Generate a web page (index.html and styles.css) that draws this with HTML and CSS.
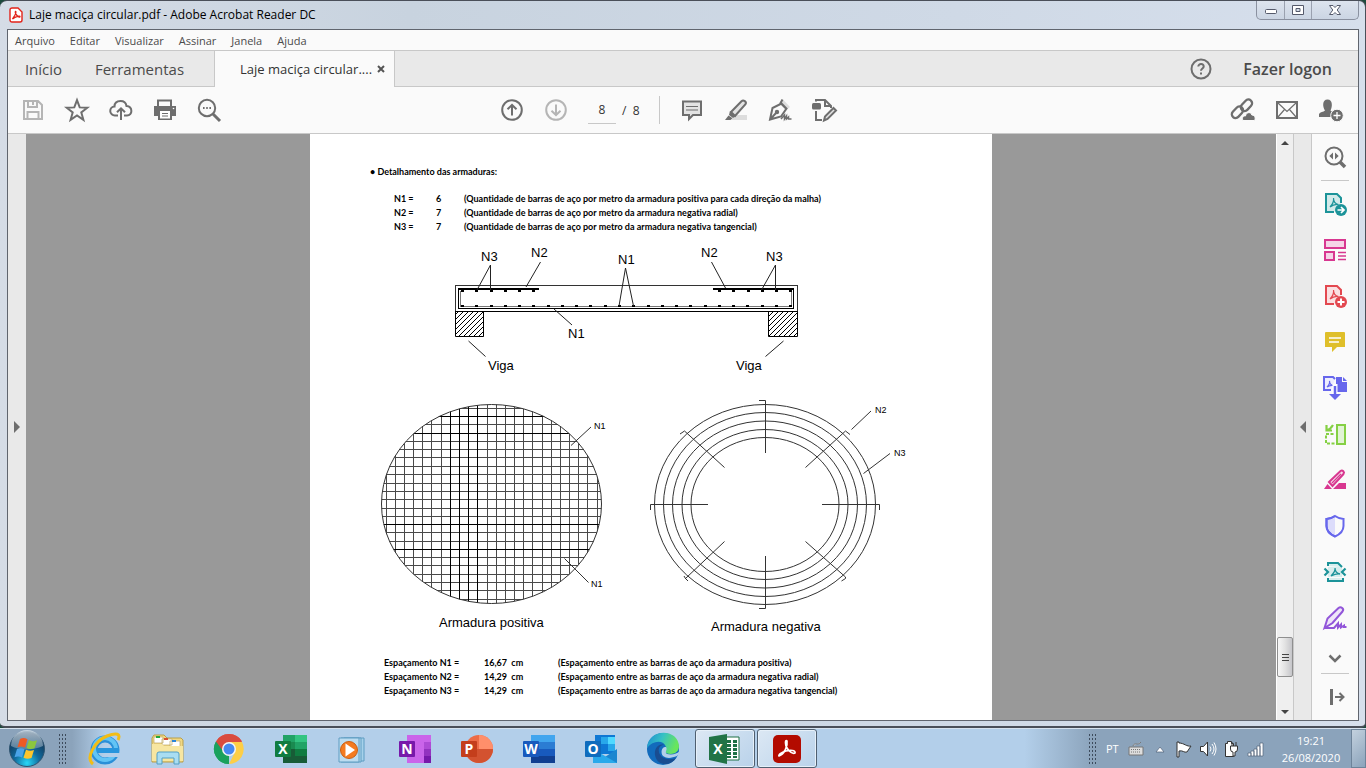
FILE: index.html
```html
<!DOCTYPE html>
<html lang="pt-BR">
<head>
<meta charset="utf-8">
<title>Laje maciça circular.pdf - Adobe Acrobat Reader DC</title>
<link rel="stylesheet" href="styles.css">
</head>
<body>
<div class="window">
  <header class="titlebar">
    <svg class="app-icon" width="14" height="16" viewBox="0 0 14 16"><path d="M1 3a2 2 0 0 1 2-2h6l4 4v8a2 2 0 0 1-2 2H3a2 2 0 0 1-2-2z" fill="#fff" stroke="#e2231a" stroke-width="1.4"/><path d="M3.500 12c1-2 4-5 3.300-7.500C6 4 6 6.500 8 8.500s3 1.800 3 1-4-.5-7.500 2.500z" fill="none" stroke="#e2231a" stroke-width="1.300"/></svg>
    <h1 class="title">Laje maciça circular.pdf - Adobe Acrobat Reader DC</h1>
    <div class="win-controls">
      <button class="win-btn" aria-label="Minimizar"><svg width="14" height="14" viewBox="0 0 14 14"><rect x="1.500" y="6.500" width="11" height="4" rx="1" fill="#fff" stroke="#555a6b"/></svg></button>
      <button class="win-btn" aria-label="Restaurar"><svg width="14" height="14" viewBox="0 0 14 14"><path d="M1.500 2.500h11v9h-11zM5 5.500h4v3H5z" fill="#fff" stroke="#555a6b" fill-rule="evenodd"/></svg></button>
      <button class="win-btn win-close" aria-label="Fechar"><svg width="14" height="14" viewBox="0 0 14 14"><path d="M1.500 2.500h3.500l2 2 2-2h3.500L9.200 7l3.300 4.500H9l-2-2-2 2H1.500L4.800 7z" fill="#fff" stroke="#555a6b"/></svg></button>
    </div>
  </header>

  <div class="client">
    <nav class="menubar">
      <button>Arquivo</button><button>Editar</button><button>Visualizar</button><button>Assinar</button><button>Janela</button><button>Ajuda</button>
    </nav>

    <div class="tabs">
      <button class="tab tab-home">Início</button>
      <button class="tab tab-tools">Ferramentas</button>
      <div class="tab-doc"><button class="tab-name">Laje maciça circular....</button><button class="tab-close" aria-label="Fechar guia"><svg width="8" height="8" viewBox="0 0 8 8"><path d="M1 1l6 6M7 1L1 7" stroke="#555" stroke-width="2"/></svg></button></div>
      <button class="help" aria-label="Ajuda"><svg width="22" height="22" viewBox="0 0 22 22" fill="none" stroke="#6e6e6e" stroke-width="2"><circle cx="11" cy="11" r="9.500"/><path d="M8.300 8.500c0-3.300 5.400-3.200 5.400 0 0 2-2.700 2-2.700 4.200M11 14.500v2"/></svg></button>
      <button class="login">Fazer logon</button>
    </div>

    <div class="toolbar">
      <div class="group">
        <button class="tool" aria-label="Salvar"><svg class="ico faded" viewBox="0 0 24 24"><path d="M3 3h14l4 4v14H3zM7 3v6h9V3M6.500 21v-7h11v7"/><path d="M12 4v3"/></svg></button>
        <button class="tool" aria-label="Favorito"><svg class="ico" viewBox="0 0 24 24"><path d="M12 2.200l2.700 7.200 7.600.3-6 4.700 2.100 7.400-6.400-4.300-6.400 4.300 2.100-7.400-6-4.700 7.600-.3z"/></svg></button>
        <button class="tool" aria-label="Enviar para a nuvem"><svg class="ico" viewBox="0 0 24 24"><path d="M9 17.500H6a4.500 4.500 0 0 1-.5-9C5.500 5 8 3 11.500 3c3.300 0 5.500 2 6 5 6.500.5 6.300 9.500.5 9.500h-3M12 22V10.500M8 14.300l4-4 4 4"/></svg></button>
        <button class="tool" aria-label="Imprimir"><svg class="ico" viewBox="0 0 24 24"><path d="M5 8V2.500h13V8" /><path d="M1 8h22v10h-4v4H5v-4H1z" fill="#6e6e6e" stroke="none"/><path d="M7 13h10v7.500H7z" fill="#fff" stroke="none"/><path d="M9 15.500h6M9 18h6" stroke-width="1"/><circle cx="20.500" cy="10.500" r=".8" fill="#fff" stroke="none"/></svg></button>
        <button class="tool" aria-label="Localizar"><svg class="ico" viewBox="0 0 24 24"><circle cx="10" cy="10" r="8.200"/><path d="M16 16l7 7" stroke-width="3"/><path d="M6 10h1.600M9.200 10h1.600M12.400 10H14"/></svg></button>
      </div>
      <div class="group group-mid">
        <button class="tool" aria-label="Página anterior"><svg class="ico" viewBox="0 0 24 24"><circle cx="12" cy="12" r="9.800"/><path d="M12 17.500V7M7.500 11.300L12 7l4.500 4.300"/></svg></button>
        <button class="tool" aria-label="Próxima página"><svg class="ico faded" viewBox="0 0 24 24"><circle cx="12" cy="12" r="9.800"/><path d="M12 6.500V17M7.500 12.700L12 17l4.500-4.300"/></svg></button>
        <input class="page-no" type="text" value="8" aria-label="Página">
        <span class="page-total">/&nbsp; 8</span>
        <span class="divider"></span>
        <button class="tool" aria-label="Comentário"><svg class="ico" viewBox="0 0 24 24"><path d="M3 3.500h18v13.500h-8l-4 4v-4H3z" fill="#e3e3e3"/><path d="M6 8.500h12M6 12h12" stroke-width="1.200"/></svg></button>
        <button class="tool" aria-label="Destacar"><svg class="ico" viewBox="0 0 24 24"><path d="M7 22l5-5h11v5z" fill="#ddd" stroke="none"/><path d="M7 14L17.500 3.200c2-1.800 5.500.7 4 3L11 18z" fill="#e3e3e3"/><path d="M6 13l6 5-3 2-4-3zM4.500 17.500L1 22h5.500l2-1.800z" fill="#6e6e6e" stroke="none"/></svg></button>
        <button class="tool" aria-label="Assinar"><svg class="ico" viewBox="0 0 24 24"><path d="M15 1.500L22 9l-2.500 2-7-7z" fill="#ddd" stroke="none"/><path d="M2 21.500L4.500 10l9-4.500 5 5L13 18.500zM2 21.500l6.500-7M14.500 1.500l-2 3.500 6.500 6.500"/><circle cx="9" cy="14" r="1.200" fill="#6e6e6e"/><path d="M13 21l3.500-4v4l2-3v3l2-2v2h3" stroke-width="1.500"/></svg></button>
        <button class="tool" aria-label="Mais ferramentas"><svg class="ico" viewBox="0 0 24 24"><path d="M4 3.500V2h9l6 6v2M13 2.500V8h6M4 13v9h6"/><rect x="0" y="5" width="9" height="6.500" rx="1.500" fill="#6e6e6e" stroke="none"/><path d="M12 22.500l1-4 8.500-8.500 2.500 2.500-8.500 8.500z" fill="#e3e3e3"/></svg></button>
      </div>
      <div class="group group-end">
        <button class="tool" aria-label="Compartilhar link"><svg class="ico" viewBox="0 0 24 24"><g stroke-width="2.300"><rect x="9" y="3.500" width="13" height="7.500" rx="3.700" transform="rotate(-47 15.500 7.300)"/><rect x="0" y="10.500" width="13" height="7.500" rx="3.700" transform="rotate(-47 6.500 14.300)"/></g><path d="M12 22.500c-1.500-3 .5-5 2.500-4.500.5-4 5.500-4.500 6.300-1 3.500 0 4 4 2.700 5.500z" fill="#6e6e6e" stroke="#fafafa" stroke-width="1"/></svg></button>
        <button class="tool" aria-label="Enviar por e-mail"><svg class="ico" viewBox="0 0 24 24"><path d="M2 4h20v16H2z"/><path d="M3 5l9 8.500L21 5M3 19l6.500-7.500M21 19l-6.500-7.500" stroke-width="1.200"/></svg></button>
        <button class="tool" aria-label="Convidar pessoas"><svg class="ico" viewBox="0 0 24 24"><path d="M0 19v-3c1-2 4.500-2 6-3.500C3.500 9 3 1.500 8.500 1.500S13.500 9 11.500 12.500c1 1 3 1.300 4.500 2v4.500z" fill="#6e6e6e" stroke="none"/><circle cx="18" cy="17.500" r="6.300" fill="#6e6e6e" stroke="#fafafa" stroke-width="1"/><path d="M14.500 17.500h7M18 14v7" stroke="#fff" stroke-width="1.300"/></svg></button>
      </div>
    </div>

    <div class="workspace">
      <button class="rail rail-left" aria-label="Abrir painel de navegação"><svg width="6" height="12" viewBox="0 0 6 12"><path d="M0 0l6 6-6 6z" fill="#6e6e6e"/></svg></button>

      <main class="viewer">
        <article class="sheet">
          <h2 class="sheet-title">• Detalhamento das armaduras:</h2>
          <table class="data bars">
            <tr><th scope="row">N1 =</th><td>6</td><td>(Quantidade de barras de aço por metro da armadura positiva para cada direção da malha)</td></tr>
            <tr><th scope="row">N2 =</th><td>7</td><td>(Quantidade de barras de aço por metro da armadura negativa radial)</td></tr>
            <tr><th scope="row">N3 =</th><td>7</td><td>(Quantidade de barras de aço por metro da armadura negativa tangencial)</td></tr>
          </table>

          <svg class="figure" viewBox="310 234 682 150" role="img" aria-label="Corte da laje">
            <defs><pattern id="hatch" width="5" height="5" patternUnits="userSpaceOnUse"><path d="M-1 6L6-1M-1 1l2-2M4 6l2-2" stroke="#000" stroke-width="1"/></pattern></defs>
            <g fill="none" stroke="#000" shape-rendering="crispEdges">
              <path d="M455.500 311.500v-26h342v26" stroke="#333"/>
              <path d="M455 311.500h343"/>
              <path d="M458.500 289v19.500h335V289"/>
              <path d="M460.500 291v15.500h331V291" stroke="#777"/>
              <path d="M458 289h81M713 289h81" stroke-width="2"/>
              <path d="M461 306h334" stroke-width="2" stroke-dasharray="3 11.270"/>
              <path d="M461 291h77M718 291h77" stroke-width="2" stroke-dasharray="3 11.270"/>
            </g>
            <path d="M455.500 311.500h28v25h-28zM768.500 311.500h29v25h-29z" fill="url(#hatch)" stroke="#000"/>
            <path d="M490.500 265L477 290m13.500-25v25M540.500 262L526 287M625.500 268L619 306m6.500-38l8 38M711.500 262l14 26M775.500 265l-14 25m14-25v25M554 309l18 16M468.500 341l17 15.500M783.500 341l-18 15.500" fill="none" stroke="#222"/>
            <g class="label">
              <text x="481" y="261">N3</text><text x="531" y="257">N2</text><text x="618" y="264">N1</text><text x="701" y="257">N2</text><text x="766" y="261">N3</text><text x="568" y="338">N1</text><text x="488" y="370">Viga</text><text x="736" y="370">Viga</text>
            </g>
          </svg>

          <svg class="figure" viewBox="310 384 682 272" role="img" aria-label="Armaduras positiva e negativa">
            <defs><clipPath id="disc"><ellipse cx="491.500" cy="504" rx="110" ry="99.500"/></clipPath></defs>
            <g clip-path="url(#disc)" stroke="#4a4a4a" fill="none" shape-rendering="crispEdges">
              <path d="M386.500 400v208m9-208v208m9-208v208m9-208v208m9-208v208m9-208v208m10-208v208m9-208v208m9-208v208m9-208v208m9-208v208m10-208v208m9-208v208m9-208v208m9-208v208m9-208v208m9-208v208m10-208v208m9-208v208m9-208v208m9-208v208m9-208v208m9-208v208m10-208v208"/>
              <path d="M380 408.500h224m-224 8h224m-224 8h224m-224 9h224m-224 8h224m-224 8h224m-224 8h224m-224 9h224m-224 8h224m-224 9h224m-224 8h224m-224 8h224m-224 9h224m-224 8h224m-224 8h224m-224 8h224m-224 9h224m-224 8h224m-224 8h224m-224 8h224m-224 9h224m-224 8h224m-224 8h224m-224 9h224"/>
              <path d="M450.500 400v208m9-208v208m9-208v208m9-208v208M380 416.500h224M380 433.500h224M380 524.500h224M380 549.500h224" stroke="#000"/>
            </g>
            <g fill="none" stroke="#333">
              <ellipse cx="491.500" cy="504" rx="110" ry="99.500"/>
              <path d="M591 427l-20 18.500M588.500 582.500l-24-24"/>
              <ellipse cx="765" cy="504.500" rx="110.500" ry="100"/>
              <ellipse cx="765" cy="504.500" rx="101.500" ry="92"/>
              <ellipse cx="765" cy="504.500" rx="92.500" ry="83.500"/>
              <ellipse cx="765" cy="504.500" rx="83" ry="75"/>
              <ellipse cx="765" cy="504.500" rx="74" ry="67"/>
              <path d="M759 400.500h6.500V453M765.500 556v52.500H759M650.500 510v-5.500H708M822 504.500h57.500v5.500M680 434l4.500-3 40 36.500M850 434.500l-4.500-3.500-40 36.500M684 576l1.500 2.500 39-37M685 578l3 3M845.500 577l-40-35.500M845.500 577v1.500l-4 2.500"/>
              <path d="M871 411l-19.500 18.500M890 453.500l-26.500 20"/>
            </g>
            <g class="label small"><text x="594" y="429">N1</text><text x="591" y="587">N1</text><text x="875" y="413">N2</text><text x="894" y="456">N3</text></g>
            <g class="label"><text x="439" y="627">Armadura positiva</text><text x="711" y="631">Armadura negativa</text></g>
          </svg>

          <table class="data spacing">
            <tr><th scope="row">Espaçamento N1 =</th><td>16,67&nbsp; cm</td><td>(Espaçamento entre as barras de aço da armadura positiva)</td></tr>
            <tr><th scope="row">Espaçamento N2 =</th><td>14,29&nbsp; cm</td><td>(Espaçamento entre as barras de aço da armadura negativa radial)</td></tr>
            <tr><th scope="row">Espaçamento N3 =</th><td>14,29&nbsp; cm</td><td>(Espaçamento entre as barras de aço da armadura negativa tangencial)</td></tr>
          </table>
        </article>
      </main>

      <div class="scrollbar">
        <button class="arrow" aria-label="Rolar para cima"><svg width="8" height="4" viewBox="0 0 8 4"><path d="M0 4l4-4 4 4z" fill="#444"/></svg></button>
        <span class="track-above"></span>
        <button class="thumb" aria-label="Barra de rolagem"><svg width="7" height="9" viewBox="0 0 7 9"><path d="M0 1.500h7M0 4.500h7M0 7.500h7" stroke="#444"/></svg></button>
        <span class="track-below"></span>
        <button class="arrow" aria-label="Rolar para baixo"><svg width="8" height="4" viewBox="0 0 8 4"><path d="M0 0l4 4 4-4z" fill="#444"/></svg></button>
      </div>

      <button class="rail rail-right" aria-label="Fechar painel de ferramentas"><svg width="6" height="12" viewBox="0 0 6 12"><path d="M6 0L0 6l6 6z" fill="#6e6e6e"/></svg></button>

      <aside class="panel">
        <button class="side" aria-label="Pesquisar"><svg class="ico" viewBox="0 0 24 24"><circle cx="11" cy="11" r="8.500"/><path d="M17 17l5 5" stroke-width="3.500"/><path d="M10 7.500v7L6.300 11zM12 7.500v7l3.700-3.500z" fill="#6e6e6e" stroke="none"/></svg></button>
        <span class="panel-line"></span>
        <button class="side teal" aria-label="Exportar PDF"><svg class="ico" viewBox="0 0 24 24"><path d="M11 20H3V2h11l4 4v5" fill="#d3eaea"/><path d="M7 15c3-3 4-6 3.500-9 0 4 2 6 5 6.500-3-.5-6 .5-8.500 2.500z" stroke-width="1.200"/><circle cx="18" cy="18" r="6" fill="currentColor" stroke="none"/><path d="M14.500 18h6M18 15l3 3-3 3" stroke="#fff" stroke-width="1.700"/></svg></button>
        <button class="side pink" aria-label="Organizar páginas"><svg class="ico" viewBox="0 0 24 24"><path d="M2 2h20v8H2zM2 14h9v8H2z" fill="#f5d4e7"/><path d="M15 14.500h8M15 18h8M15 21.500h8" stroke-width="1.300"/></svg></button>
        <button class="side red" aria-label="Criar PDF"><svg class="ico" viewBox="0 0 24 24"><path d="M11 20H3V2h11l4 4v5" fill="#fae0e2"/><path d="M7 15c3-3 4-6 3.500-9 0 4 2 6 5 6.500-3-.5-6 .5-8.500 2.500z" stroke-width="1.200"/><circle cx="18" cy="18" r="6" fill="currentColor" stroke="none"/><path d="M14.500 18h7M18 14.500v7" stroke="#fff"/></svg></button>
        <button class="side gold" aria-label="Comentário"><svg class="ico" viewBox="0 0 24 24"><path d="M3 2h18a1 1 0 0 1 1 1v14h-8l-5 5v-5H2V3a1 1 0 0 1 1-1z" fill="currentColor" stroke="none"/><path d="M6 8h12M6 12h10" stroke="#fff" stroke-width="1.700"/></svg></button>
        <button class="side violet" aria-label="Combinar arquivos"><svg class="ico" viewBox="0 0 24 24"><path d="M8 14H1V1h9l2 2" fill="#eeeefe"/><path d="M4 11c2-2 3-4 2.500-6 0 3 1 4 4 4.500-2-.5-4.500 0-6.500 1.500z" stroke-width="1.200"/><path d="M13 1h6v5h5v10H13zM20 1l4 4h-4z" fill="currentColor" stroke="none"/><path d="M12 8v12" stroke="#fff" stroke-width="5"/><path d="M12 10v9" stroke-width="2.500"/><path d="M6 18h12l-6 6z" fill="currentColor" stroke="none"/></svg></button>
        <button class="side green" aria-label="Editar páginas"><svg class="ico" viewBox="0 0 24 24"><path d="M14 3h8v19h-8z" fill="#e1f3d5"/><path d="M10.500 12H3v9.500h9" stroke-dasharray="3 1.500"/><path d="M4 8c3-.5 4.500-2.500 6-5M3.500 3v5.500H9" stroke-width="2.200"/></svg></button>
        <button class="side pink" aria-label="Redigir"><svg class="ico" viewBox="0 0 24 24"><path d="M1 21l3.500-5L9 21zM10 21l6-6h7v6z" fill="currentColor" stroke="none"/><path d="M6 14L17.500 3c2-1.500 4.500 1 3 3L9.500 18z" fill="#f7dcea"/><path d="M9 15L18 6" stroke-width="1.300"/></svg></button>
        <button class="side violet" aria-label="Proteger"><svg class="ico" viewBox="0 0 24 24"><path d="M12 2C9 4 6 5 3.500 5v7c0 5 4 8.500 8.500 10.500" fill="#dcdcfb"/><path d="M12 2c3 2 6 3 8.500 3v7c0 5-4 8.500-8.500 10.500C7.500 20.500 3.500 17 3.500 12V5C6 5 9 4 12 2z"/></svg></button>
        <button class="side teal" aria-label="Compactar PDF"><svg class="ico" viewBox="0 0 24 24"><path d="M5 7h14v10H5z" fill="#d8eeee" stroke="none"/><path d="M5 6V3h10l4 4M5 18v3h15v-3" fill="#d8eeee"/><path d="M8 16c3-3 4.500-5 4-8 0 3.500 2.500 5.500 5 6-3.500-.5-6 .5-9 2z" stroke-width="1.300"/><path d="M1.500 8.500L5 12l-3.500 3.500M22.500 8.500L19 12l3.500 3.500" stroke-width="2.200"/></svg></button>
        <button class="side purple" aria-label="Preencher e assinar"><svg class="ico" viewBox="0 0 24 24"><path d="M1.500 22l3-9.500L15.500 2c2.500-2 6 1 4 3.500L9.500 17z" fill="#efe5f9"/><path d="M1.500 22H11l4-4.500v4l3-3v3l3-2v1.500h2.500"/></svg></button>
        <button class="side side-more" aria-label="Mais"><svg class="ico" viewBox="0 0 24 24"><path d="M6.500 10.500L12 16l5.500-5.500" stroke-width="2.500"/></svg></button>
        <span class="panel-line"></span>
        <button class="side" aria-label="Recolher painel"><svg class="ico" viewBox="0 0 24 24"><path d="M8.500 4v16" stroke-width="3"/><path d="M12 12h8M16.500 8l4 4-4 4"/></svg></button>
      </aside>
    </div>
  </div>
</div>

<footer class="taskbar">
  <button class="start" aria-label="Iniciar"><svg width="38" height="38" viewBox="0 0 38 38"><defs><radialGradient id="orb" cx=".5" cy=".9" r=".8"><stop offset="0" stop-color="#27d8f7"/><stop offset=".45" stop-color="#116b9e"/><stop offset="1" stop-color="#12304f"/></radialGradient><linearGradient id="orbTop" x2="0" y2="1"><stop offset="0" stop-color="#dce6ee"/><stop offset="1" stop-color="#6a8ca6"/></linearGradient></defs><circle cx="19" cy="19" r="17.500" fill="url(#orb)" stroke="#2f5470"/><path d="M3 16a16 16 0 0 1 32 0c-9 4-23 5-32 0z" fill="url(#orbTop)" opacity=".75"/><path d="M12 9c3-1.500 5-1 7.500.3L17 17.500c-3-1.300-5-1.300-7.500-.3z" fill="#ee5a24"/><path d="M21 10c3 1.500 5 1.500 8 .3l-2.500 8c-3 1.200-5 1-8-.4z" fill="#8cc63e"/><path d="M9 19c3-1.300 5-1 7.500.2L14 27.500c-2.500-1.300-5-1.300-7.500-.2z" fill="#4aa3e8"/><path d="M18 19.700c3 1.300 5 1.500 8 .3l-2.500 8c-3 1.200-5.500 1-8-.3z" fill="#fdc52c"/></svg></button>
  <span class="grip"></span>
  <div class="apps">
    <button class="app" aria-label="Internet Explorer"><svg viewBox="0 0 34 34"><circle cx="17" cy="18" r="11" fill="none" stroke="#2a8fd8" stroke-width="7"/><circle cx="17" cy="17" r="11" fill="none" stroke="#62c4f5" stroke-width="4"/><path d="M9 18.500h22" stroke="#2795dd" stroke-width="5"/><path d="M20 21h13v4H20z" fill="#b3cfea"/><path d="M5 32C-3 26 7 9 19 4c10-4 14-2 11 4" fill="none" stroke="#f2bd16" stroke-width="3"/></svg></button>
    <button class="app" aria-label="Explorador"><svg viewBox="0 0 34 34"><path d="M2 30V6l2-3h10l3 3h14l2 2v22z" fill="#f0d883" stroke="#b99f4b"/><path d="M4 5h9v6H4zM12 7h10v6H12zM20 9h10v6H20z" fill="#fff" stroke="#bfa762" stroke-width=".7"/><path d="M6 4h4v2H6z" fill="#1fa83a"/><path d="M14 6h4v2h-4z" fill="#d84c2f"/><path d="M22 8h4v2h-4z" fill="#2c85d7"/><path d="M2 12h10l2 2h19v15H2z" fill="#f7e6a1"/><path d="M7 32V22q0-2 2-2h18q2 0 2 2v10h-5v-6H12v6z" fill="#a9ddf2" stroke="#539fc5"/></svg></button>
    <button class="app" aria-label="Chrome"><svg viewBox="0 0 34 34"><path d="M17 17L4 9.500a15 15 0 0 1 26 0z" fill="#de5145"/><path d="M17 17v15A15 15 0 0 1 4 9.500z" fill="#1ca25c"/><path d="M4 9.500L12 20l5 12a15 15 0 0 1-13-22.500z" fill="#1aa15d"/><path d="M17 10h13a15 15 0 0 1-13 22l6-12z" fill="#fdce46"/><path d="M4 9.500A15 15 0 0 1 30 9.500H17L11 19z" fill="#d94b3e"/><circle cx="17" cy="17" r="7" fill="#f4f4f4"/><circle cx="17" cy="17" r="5.500" fill="#4688f1"/></svg></button>
    <button class="app" aria-label="Excel"><svg viewBox="0 0 34 34"><path d="M9 3h12v14H9z" fill="#21a366"/><path d="M21 3h12v7H21z" fill="#33c481"/><path d="M21 10h12v7H21z" fill="#21a366"/><path d="M9 10h12v7H9z" fill="#1a8a50"/><path d="M9 17h24v14H9z" fill="#185c37"/><path d="M21 17h12v7H21z" fill="#107c41"/><rect x="1" y="9" width="16" height="16" rx="1" fill="#107c41"/><text x="9" y="22">X</text></svg></button>
    <button class="app" aria-label="Media Player"><svg viewBox="0 0 34 34"><path d="M8 6h20v23H8z" fill="#a6d1ea" stroke="#5e9dc2"/><path d="M5 6h20v24H5z" fill="#b5d9ed" stroke="#5e9dc2"/><path d="M3 6h20v24H3z" fill="#bcdcf0" stroke="#5e9dc2"/><circle cx="13" cy="18" r="8.500" fill="#f47b20" stroke="#ca5f13"/><path d="M9.500 11.500L19 18l-9.500 6.500z" fill="#fff"/></svg></button>
    <button class="app" aria-label="OneNote"><svg viewBox="0 0 34 34"><path d="M9 3h24v28H9z" fill="#ca64ea"/><path d="M26 10h7v7h-7z" fill="#ae4bd5"/><path d="M26 17h7v7h-7z" fill="#9332bf"/><path d="M26 24h7v7h-7z" fill="#7719aa"/><rect x="1" y="9" width="16" height="16" rx="1" fill="#7719aa"/><text x="9" y="22">N</text></svg></button>
    <button class="app" aria-label="PowerPoint"><svg viewBox="0 0 34 34"><circle cx="19" cy="17" r="14" fill="#ed6c47"/><path d="M19 3a14 14 0 0 1 14 14H19z" fill="#ff8f6b"/><path d="M5 17h28a14 14 0 0 1-28 0z" fill="#d35230"/><rect x="1" y="9" width="16" height="16" rx="1" fill="#c43e1c"/><text x="9" y="22">P</text></svg></button>
    <button class="app" aria-label="Word"><svg viewBox="0 0 34 34"><path d="M9 3h24v7H9z" fill="#41a5ee"/><path d="M9 10h24v7H9z" fill="#2b7cd3"/><path d="M9 17h24v7H9z" fill="#185abd"/><path d="M9 24h24v7H9z" fill="#103f91"/><rect x="1" y="9" width="16" height="16" rx="1" fill="#185abd"/><text x="9" y="22">W</text></svg></button>
    <button class="app" aria-label="Outlook"><svg viewBox="0 0 34 34"><path d="M11 3h20v19H11z" fill="#0f78d4"/><path d="M17 5h7v7h-7z" fill="#28a8ea"/><path d="M24 5h7v7h-7z" fill="#50d9ff"/><path d="M24 12h7v7h-7z" fill="#28a8ea"/><path d="M9 18l12 7 12-8v14H9z" fill="#1a86d0"/><path d="M9 17l24 14H9z" fill="#29a9eb"/><rect x="1" y="9" width="16" height="16" rx="1" fill="#0f6cbd"/><text x="9" y="22">O</text></svg></button>
    <button class="app" aria-label="Edge"><svg viewBox="0 0 34 34"><defs><linearGradient id="edge" x2="1" y2=".3"><stop offset="0" stop-color="#198bd1"/><stop offset=".5" stop-color="#36c1c5"/><stop offset="1" stop-color="#69e65c"/></linearGradient></defs><circle cx="17" cy="17" r="16" fill="#126bbc"/><path d="M1 16C2-4 32-4 33 14c0 8-8 9-13 7-3-2 1-3 0-6C18 8 7 8 1 16z" fill="url(#edge)"/><path d="M18 13c-7 0-7 10 0 13 5 2 9 1 12 0-6 9-19 8-21-3-1-7 4-12 9-10z" fill="#194d91"/><path d="M21 22c-3-2 1-4-1-7-4-1-6 5-3 9 4 3 9 2 14 0 3-3 3-4 3-5-3 3-8 4-13 3z" fill="#b3cfea"/></svg></button>
    <button class="app open" aria-label="Excel 2013"><svg viewBox="0 0 34 34"><path d="M17 5h14v23H17z" fill="#fff" stroke="#1e7145"/><path d="M19 8h4v3h-4zm6 0h4v3h-4zm-6 4h4v3h-4zm6 0h4v3h-4zm-6 4h4v3h-4zm6 0h4v3h-4zm-6 4h4v3h-4zm6 0h4v3h-4zm-6 4h4v2h-4zm6 0h4v2h-4z" fill="#1e7145"/><path d="M1 5l18-3v30L1 28z" fill="#217346"/><text x="10" y="22">X</text></svg></button>
    <button class="app open" aria-label="Acrobat Reader"><svg viewBox="0 0 34 34"><rect x="3" y="3" width="28" height="28" rx="5" fill="#b30b00"/><path d="M9 24c5-2 9-9 8-15-2-2-2 4 0 7 2 4 6 6 8 5 1-3-5-3-9-2s-8 4-7 5z" fill="none" stroke="#fff" stroke-width="1.700"/></svg></button>
  </div>
  <div class="tray">
    <span class="grip"></span>
    <span class="lang">PT</span>
    <button aria-label="Teclado"><svg viewBox="0 0 18 18"><path d="M2 7h14v8H2zM6 6c1-4 5 0 8-4" fill="#ddd" stroke="#777"/><path d="M4 9.500h10M4 12h10" stroke="#777" stroke-dasharray="1 1"/></svg></button>
    <button aria-label="Mostrar ícones ocultos"><svg viewBox="0 0 18 18"><path d="M5 12l4-5 4 5z" fill="#fff" stroke="#52627a" stroke-width=".7"/></svg></button>
    <button aria-label="Central de ações"><svg viewBox="0 0 18 18"><path d="M2 2v15h2v-6c4-1 5 2 8 1l4-6c-4 1-7-3-12-3V2z" fill="#fff" stroke="#333"/></svg></button>
    <button aria-label="Volume"><svg viewBox="0 0 18 18"><path d="M1.500 6.500h3l4-4.500v14l-4-4.500h-3z" fill="#fff" stroke="#333"/><path d="M11 6.500q2 2.500 0 5M13 4q4 5 0 10M15 2.500q4 6.500 0 13" fill="none" stroke="#fff"/></svg></button>
    <button aria-label="Energia"><svg viewBox="0 0 18 18"><path d="M2.500 3.500h2v-2h4v2h2v13h-8z" fill="#fff" stroke="#333"/><path d="M9 2v4M13 2v4M7.500 6h7v3q0 3-2.500 3v4h-2v-4Q7.500 12 7.500 9z" fill="#fff" stroke="#333"/></svg></button>
    <button aria-label="Rede"><svg viewBox="0 0 18 18"><path d="M1 13h3v3H1zM4 11h3v5H4zM7 9h3v7H7zM10 6h3v10h-3zM13 3h3v13h-3z" fill="#fff" stroke="#52627a" stroke-width=".7"/></svg></button>
    <button class="clock"><time datetime="2020-08-26T19:21">19:21<br>26/08/2020</time></button>
    <button class="show-desktop" aria-label="Mostrar área de trabalho"></button>
  </div>
</footer>
</body>
</html>
```

FILE: styles.css
```css
* { box-sizing: border-box; }

body {
  margin: 0;
  height: 100vh;
  display: flex;
  flex-direction: column;
  overflow: hidden;
  font-family: "Open Sans", "Noto Sans", sans-serif;
  font-size: 12px;
  color: #4b4b4b;
  background: #1c4a3c;
}

button {
  margin: 0;
  padding: 0;
  border: 0;
  background: none;
  font: inherit;
  color: inherit;
}

svg { display: block; flex: none; }

/* Window frame */
.window {
  flex: 1;
  min-height: 0;
  display: flex;
  flex-direction: column;
  padding: 0 6px 5px 7px;
  border: solid #4a4f59;
  border-width: 1px 1px 2px 0;
  border-radius: 7px 7px 5px 5px;
  background: linear-gradient(90deg, #d5dce6, #c8d3df 30%, #cfd9e6 70%, #d6dfec);
}

.titlebar {
  height: 28px;
  display: flex;
  align-items: center;
  padding-left: 2px;
}

.title {
  flex: 1;
  margin: 0 0 0 6px;
  font-size: 12px;
  line-height: 16px;
  font-weight: 400;
  color: #000;
}

.win-controls {
  align-self: flex-start;
  display: flex;
  height: 19px;
  border: 1px solid #8a91a0;
  border-top: 0;
  border-radius: 0 0 5px 5px;
  background: linear-gradient(#dde4ee, #cbd5e3);
}

.win-btn {
  width: 27px;
  display: grid;
  place-items: center;
}

.win-btn + .win-btn { border-left: 1px solid #9aa1af; }
.win-btn.win-close { width: 47px; }

.client {
  flex: 1;
  min-height: 0;
  display: flex;
  flex-direction: column;
  border: 1px solid #60656e;
  background: #fafafa;
}

/* Menu bar and tabs */
.menubar {
  height: 20px;
  display: flex;
  align-items: center;
  gap: 15px;
  padding-left: 7px;
  font-size: 11px;
}

.tabs {
  height: 37px;
  display: flex;
  align-items: stretch;
  border: solid #c8c8c8;
  border-width: 1px 0;
  background: #e9e9e9;
  font-size: 15px;
}

.tab-home { width: 71px; }
.tab-tools { width: 121px; margin-right: 14px; }

.tab-doc {
  width: 181px;
  display: flex;
  align-items: center;
  gap: 5px;
  margin-bottom: -1px;
  padding-left: 25px;
  border: solid #c8c8c8;
  border-width: 0 1px;
  background: #fafafa;
  font-size: 13px;
  color: #333;
}

.help { margin-left: auto; display: grid; place-items: center; }
.login { margin: 0 26px 0 31px; font-size: 16px; font-weight: 600; }

/* Toolbar */
.toolbar {
  height: 47px;
  display: grid;
  grid-template-columns: 1fr auto 1fr;
  border-bottom: 1px solid #c8c8c8;
  font-size: 12px;
}

.group { display: flex; align-items: center; padding-left: 3px; }
.group-mid { padding: 0 30px 0 0; }
.group-end { justify-content: flex-end; padding-right: 5px; }

.tool { width: 44px; height: 46px; display: grid; place-items: center; }

.ico {
  width: 24px;
  height: 24px;
  fill: none;
  stroke: currentColor;
  stroke-width: 2;
  overflow: visible;
}

.tool, .side { color: #6e6e6e; }
.tool .faded { color: #b5b5b5; }

.page-no {
  width: 28px;
  height: 28px;
  margin: 0 6px 0 10px;
  padding: 0;
  border: 0;
  border-bottom: 1px solid #c8c8c8;
  background: none;
  font: inherit;
  color: #333;
  text-align: center;
}

.page-total { width: 37px; color: #333; }
.divider { width: 1px; height: 28px; margin-right: 10px; background: #c8c8c8; }

/* Workspace */
.workspace { flex: 1; min-height: 0; display: flex; }

.rail {
  width: 18px;
  display: grid;
  place-items: center;
  background: #e9e9e9;
}

.rail-right { width: 19px; border: solid #c8c8c8; border-width: 0 1px; }

.viewer {
  flex: 1;
  min-width: 0;
  overflow: hidden;
  background: #999;
}

.sheet {
  width: 682px;
  min-height: 100%;
  margin: 0 auto;
  padding-top: 31px;
  background: #fff;
  font-family: Lato, "Open Sans", sans-serif;
  font-size: 9px;
  line-height: 14px;
  font-variant-ligatures: none;
  color: #000;
}

.sheet-title {
  margin: 0 0 13px 60px;
  font-size: inherit;
  font-weight: 700;
}

.data { border-collapse: collapse; font-weight: 700; }
.data th, .data td { padding: 0; text-align: left; white-space: nowrap; }
.bars { margin-left: 84px; }
.bars th { width: 42px; }
.bars td:nth-child(2) { width: 28px; }
.spacing { margin-left: 74px; }
.spacing th { width: 100px; }
.spacing td:nth-child(2) { width: 74px; }

.figure { width: 100%; height: auto; }

.label {
  font-family: "Liberation Sans", Arial, sans-serif;
  font-size: 13px;
  fill: #000;
}

.small { font-size: 9px; }

.scrollbar {
  width: 17px;
  display: flex;
  flex-direction: column;
  border-left: 1px solid #fff;
  background: #efefef;
}

.arrow { height: 17px; display: grid; place-items: center; }
.track-above { flex: 19; }
.track-below { flex: 1; }

.thumb {
  height: 40px;
  display: grid;
  place-items: center;
  border: 1px solid #8f8f8f;
  border-radius: 2px;
  background: linear-gradient(90deg, #f7f7f7, #e2e2e2 50%, #c6c6ca);
}

.panel {
  width: 46px;
  display: flex;
  flex-direction: column;
  align-items: center;
  overflow: hidden;
}

.side { flex: none; width: 46px; height: 46px; display: grid; place-items: center; }
.side-more { height: 32px; }
.panel-line { flex: none; width: 28px; height: 1px; background: #c8c8c8; }

.teal { color: #1c9399; }
.pink { color: #d83790; }
.red { color: #e34850; }
.gold { color: #dfbf2a; }
.violet { color: #6767ec; }
.green { color: #85d044; }
.purple { color: #9256d9; }

/* Taskbar */
.taskbar {
  flex: none;
  height: 40px;
  display: flex;
  align-items: stretch;
  border-top: 1px solid #d5e2ef;
  background: linear-gradient(90deg, #8ba3bb, #8ba3bb 72px, #b3cfea 105px, #b3cfea 75%, #8ba3bb 80%);
}

.start { width: 54px; display: grid; place-items: center; }

.grip {
  align-self: center;
  width: 9px;
  height: 32px;
  background: radial-gradient(circle, #3d4b5c 1px, transparent 1px) 0 0 / 3px 4px;
}

.taskbar > .grip { margin: 0 12px 0 4px; }
.apps { display: flex; flex: 1; gap: 2px; margin-left: -4px; }
.app { width: 60px; display: grid; place-items: center; border-radius: 3px; }
.app svg { width: 34px; height: 34px; }

.app text {
  font-family: "Open Sans", sans-serif;
  font-size: 14px;
  font-weight: 700;
  fill: #fff;
  text-anchor: middle;
}

.app.open {
  border: 1px solid #4f5f70;
  background: linear-gradient(135deg, #dce8f4, #b9d2ea);
  box-shadow: inset 0 0 0 1px #e6f0f9;
}

.tray { display: flex; align-items: center; color: #fff; }
.tray svg { width: 18px; height: 18px; }
.tray button { width: 24px; display: grid; place-items: center; }
.lang { width: 18px; margin-left: 9px; font-size: 11px; }
.tray .clock { width: 72px; margin: 0 4px 0 7px; font-size: 11px; line-height: 17px; text-align: center; }

.tray .show-desktop {
  align-self: stretch;
  width: 15px;
  border: 1px solid #6d8399;
  background: linear-gradient(135deg, #c3d1de, #8ba3bb);
}
```
